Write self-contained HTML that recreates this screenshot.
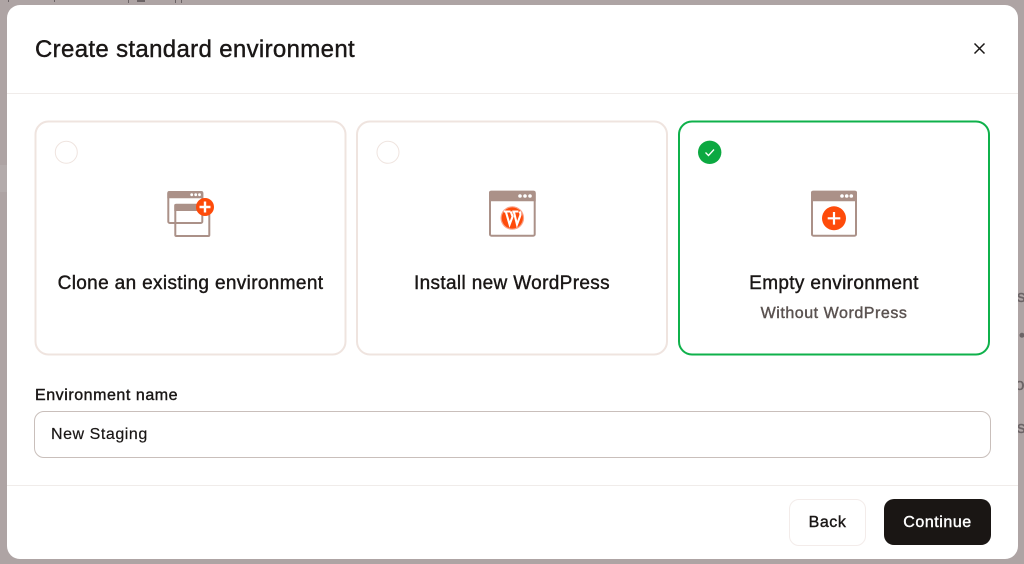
<!DOCTYPE html>
<html lang="en">
<head>
<meta charset="utf-8">
<title>Create standard environment</title>
<style>
html,body{margin:0;padding:0;width:1024px;height:564px;overflow:hidden;background:#aea4a4;font-family:"Liberation Sans",sans-serif;color:#1a1716}
.bg{position:absolute;color:#6c6466;font-size:17px;line-height:20px;white-space:nowrap;-webkit-text-stroke:.4px currentColor}
.mark{position:absolute;top:0;background:#6c6466}
.modal{position:absolute;left:7px;top:5px;width:1011px;height:554px;background:#fff;border-radius:13px}
.t{position:absolute;white-space:nowrap;-webkit-text-stroke:.4px currentColor}
.line{position:absolute;left:7px;width:1011px;height:1px;background:#f0ecea}
.c{text-align:center}
svg{position:absolute;overflow:visible}
.h{font-size:19px;line-height:22px;letter-spacing:.35px;top:273px}
.b{font-size:16px;line-height:20px;letter-spacing:.55px}
</style>
</head>
<body>
<div style="position:absolute;left:0;top:165px;width:7px;height:27px;background:#b3abab"></div>
<div class="mark" style="left:8px;width:1px;height:2px"></div>
<div class="mark" style="left:54px;width:1px;height:2px"></div>
<div class="mark" style="left:128px;width:1px;height:3px"></div>
<div class="mark" style="left:137px;width:8px;height:2px"></div>
<div class="mark" style="left:175px;width:1px;height:3px"></div>
<div class="mark" style="left:181px;width:1px;height:3px"></div>
<div class="bg" style="left:1017px;top:287px">ss</div>
<div class="bg" style="left:1019px;top:326px">•</div>
<div class="bg" style="left:1015px;top:375px">o</div>
<div class="bg" style="left:1017px;top:418px">s</div>
<div class="modal"></div>

<div class="t" style="left:35px;top:36px;font-size:24px;line-height:28px;letter-spacing:.34px">Create standard environment</div>
<svg style="left:974px;top:43px" width="11" height="11" viewBox="0 0 11 11"><path d="M.5 .5L10.500 10.500M10.500 .5L.5 10.500" stroke="#1a1716" stroke-width="1.500" fill="none"/></svg>
<div class="line" style="top:93px"></div>

<svg style="left:0;top:0" width="1024" height="564" viewBox="0 0 1024 564">
<g fill="#fff" stroke="#efe4df" stroke-width="2">
<rect x="35.500" y="121.500" width="310" height="233" rx="13"/>
<rect x="357" y="121.500" width="310" height="233" rx="13"/>
</g>
<rect x="679" y="121.500" width="310" height="233" rx="13" fill="#fff" stroke="#0fb14b" stroke-width="2"/>
<g fill="#fff" stroke="#efe4df" stroke-width="1">
<circle cx="66.300" cy="152.300" r="11"/>
<circle cx="388" cy="152.300" r="11"/>
</g>
<circle cx="709.700" cy="152.300" r="11.700" fill="#0ca941"/>
<path d="M705.500 152.500L708.500 155.500L714 149.500" stroke="#fff" stroke-width="1.300" fill="none"/>
</svg>

<svg style="left:167px;top:190px" width="48" height="48" viewBox="0 0 48 48">
<rect x="1.300" y="2" width="34" height="31" rx="1.500" fill="#fff" stroke="#ab9188" stroke-width="2"/>
<path d="M.3 3a2 2 0 0 1 2-2H34.300a2 2 0 0 1 2 2V8.300H.3Z" fill="#ab9188"/>
<circle cx="24.700" cy="4.700" r="1.400" fill="#fff"/><circle cx="28.700" cy="4.700" r="1.400" fill="#fff"/><circle cx="32.500" cy="4.700" r="1.400" fill="#fff"/>
<rect x="8.300" y="14.700" width="34" height="31.300" rx="1" fill="none" stroke="#ab9188" stroke-width="2"/>
<path d="M7.300 15a1 1 0 0 1 1-1H42a1 1 0 0 1 1 1V21H7.300Z" fill="#ab9188"/>
<circle cx="38" cy="17" r="9" fill="#fe4b0a"/>
<path d="M38 11.500V22.500M32.500 17H43.500" stroke="#fff" stroke-width="2.400" fill="none"/>
</svg>

<svg style="left:489px;top:190px" width="48" height="48" viewBox="0 0 48 48">
<rect x="1" y="1.700" width="44.700" height="44" rx="1.500" fill="#fff" stroke="#ab9188" stroke-width="2"/>
<path d="M0 2.700a2 2 0 0 1 2-2H44.700a2 2 0 0 1 2 2V11.300H0Z" fill="#ab9188"/>
<circle cx="31" cy="6" r="1.800" fill="#fff"/><circle cx="36" cy="6" r="1.800" fill="#fff"/><circle cx="41" cy="6" r="1.800" fill="#fff"/>
<circle cx="23.300" cy="28" r="11.800" fill="#f9a288"/>
<circle cx="23.300" cy="28" r="10.600" fill="#fe4b0a"/>
<path d="M14.800 21.500H21.500M16.800 21.500L20.600 34.500L23.600 26.500L21.700 21.500M23.300 21.500H29.500M24.800 21.500L28 34.500L31.300 25.500Q31.900 23.300 30.500 21.500" stroke="#fff" stroke-width="2.100" fill="none"/>
</svg>

<svg style="left:811px;top:190px" width="48" height="48" viewBox="0 0 48 48">
<rect x="1" y="1.700" width="44" height="44" rx="1.500" fill="#fff" stroke="#ab9188" stroke-width="2"/>
<path d="M0 2.700a2 2 0 0 1 2-2H44a2 2 0 0 1 2 2V11.300H0Z" fill="#ab9188"/>
<circle cx="31" cy="6" r="1.800" fill="#fff"/><circle cx="35.700" cy="6" r="1.800" fill="#fff"/><circle cx="40.300" cy="6" r="1.800" fill="#fff"/>
<circle cx="23" cy="28.300" r="12" fill="#fe4b0a"/>
<path d="M23 22V34.600M16.700 28.300H29.300" stroke="#fff" stroke-width="2.200" fill="none"/>
</svg>

<div class="t c h" style="left:35px;width:311px">Clone an existing environment</div>
<div class="t c h" style="left:357px;width:310px">Install new WordPress</div>
<div class="t c h" style="left:679px;width:310px">Empty environment</div>
<div class="t c b" style="left:679px;width:310px;top:304px;color:#5a5250">Without WordPress</div>

<div class="t b" style="left:35px;top:386px">Environment name</div>
<div style="position:absolute;left:34px;top:411px;width:957px;height:47px;box-sizing:border-box;border:1px solid #c9bfbb;border-radius:10px;background:#fff"></div>
<div class="t b" style="left:51px;top:425px;-webkit-text-stroke:.2px #1a1716">New Staging</div>

<div class="line" style="top:485px"></div>
<div style="position:absolute;left:789px;top:499px;width:77px;height:47px;box-sizing:border-box;border:1px solid #f3ecea;border-radius:10px;background:#fff"></div>
<div class="t c b" style="left:789px;width:77px;top:513px">Back</div>
<div style="position:absolute;left:884px;top:499px;width:107px;height:46px;border-radius:10px;background:#1a1614"></div>
<div class="t c b" style="left:884px;width:107px;top:513px;color:#fff">Continue</div>
</body>
</html>
